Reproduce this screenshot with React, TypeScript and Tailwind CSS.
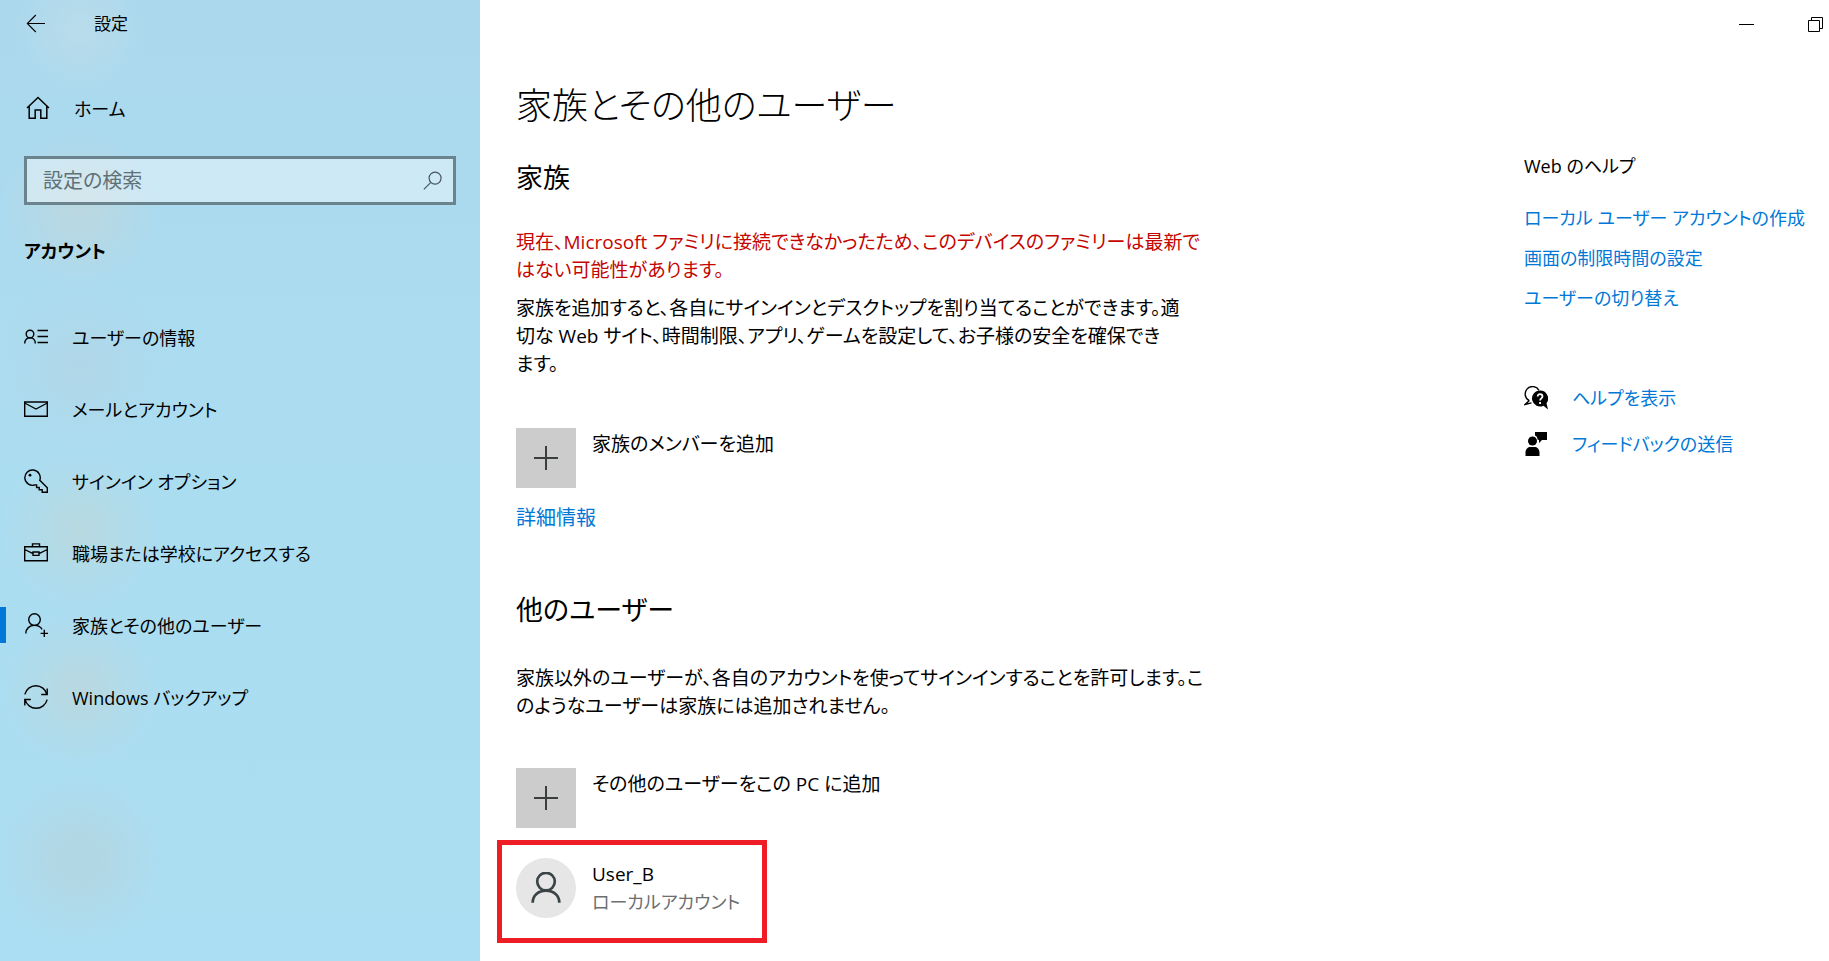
import type { ReactNode } from 'react';

interface IconProps {
  children: ReactNode;
  className?: string;
}

function Icon({ children, className = 'size-6' }: IconProps) {
  return (
    <svg
      viewBox="0 0 24 24"
      className={`shrink-0 ${className}`}
      fill="none"
      stroke="currentColor"
      strokeWidth="1.4"
      aria-hidden="true"
    >
      {children}
    </svg>
  );
}

const navItems = [
  {
    label: 'ユーザーの情報',
    icon: (
      <Icon>
        <circle cx="6" cy="9" r="3.8" />
        <path d="M.7 18.5c0-3.5 2.3-5.8 5.3-5.8s5.3 2.3 5.3 5.8M13.5 5.5H24M13.5 11.5H24M13.5 17.5H24" />
      </Icon>
    ),
  },
  {
    label: 'メールとアカウント',
    icon: (
      <Icon>
        <path d="M.7 5h22.6v14.3H.7zM.7 6l11.3 6 11.3-6" />
      </Icon>
    ),
  },
  {
    label: 'サインイン オプション',
    icon: (
      <Icon>
        <path d="M15.8 11.2a7.7 7.7 0 1 0-4.7 4.7h1.5v2.6h2.6v2.3h3v2.5h5.1v-4.6z" />
        <circle cx="6" cy="6.2" r="1.4" fill="currentColor" stroke="none" />
      </Icon>
    ),
  },
  {
    label: '職場または学校にアクセスする',
    icon: (
      <Icon>
        <path d="M.7 5.8h22.6v14H.7zM8.5 5.8V2.9h7v2.9M.7 8.5l8.3 4.2M23.3 8.5L15 12.7M9 11h6v3.4H9z" />
      </Icon>
    ),
  },
  {
    label: '家族とその他のユーザー',
    active: true,
    icon: (
      <Icon>
        <circle cx="10.5" cy="6.6" r="5.8" />
        <path d="M1.8 20.6c0-5 3.6-8.2 8.7-8.2 3.4 0 6.2 1.5 7.6 4M20.3 16.8v7.2M16.6 20.4H24" />
      </Icon>
    ),
  },
  {
    label: 'Windows バックアップ',
    icon: (
      <Icon>
        <path d="M.8 9.3a11.4 11.4 0 0 1 22.1 0M23.2 3.5v6h-6M23.2 14.7a11.4 11.4 0 0 1-22.1 0M.8 20.5v-6h6" />
      </Icon>
    ),
  },
];

const helpLinks = ['ローカル ユーザー アカウントの作成', '画面の制限時間の設定', 'ユーザーの切り替え'];

function Sidebar() {
  return (
    <nav className="w-[480px] shrink-0 bg-[#abdaee] bg-[radial-gradient(circle_at_80px_30px,#b9dcea_0,#b9dcea00_70px),radial-gradient(circle_at_80px_210px,#bbd7df_0,#bbd7df00_80px),radial-gradient(circle_at_80px_370px,#b1d7e8_0,#b1d7e800_90px),radial-gradient(circle_at_80px_530px,#b8d9e0_0,#b8d9e000_80px),radial-gradient(circle_at_80px_690px,#b9d8e0_0,#b9d8e000_80px),radial-gradient(circle_at_80px_860px,#b2d7e4_20px,#b2d7e400_85px),linear-gradient(#abd8ed,#abddf1_50%,#abdef2)] text-lg">
      <div className="flex h-12 items-center pl-6">
        <button type="button" aria-label="戻る" className="w-[70px]">
          <Icon>
            <path d="M21 11.5H3.5M11.8 3L3.3 11.5l8.5 8.5" strokeWidth="1.1" />
          </Icon>
        </button>
        <span className="text-[17px]">設定</span>
      </div>

      <a href="#home" className="mt-9 flex h-12 items-center gap-6 pl-[26px]">
        <Icon>
          <path d="M1 12L12 1.5 23 12M3.2 10.2v12h6v-8.2h5.6v8.2h6v-12" strokeWidth="1.5" />
        </Icon>
        <span className="pt-0.5">ホーム</span>
      </a>

      <div className="mx-6 mt-6 flex h-[49px] items-center border-[3px] border-[#6b838d] bg-white/40 pr-2.5 pl-4">
        <input
          type="text"
          aria-label="設定の検索"
          placeholder="設定の検索"
          className="min-w-0 flex-1 bg-transparent text-[20px] outline-none placeholder:text-[#5f7178]"
        />
        <Icon className="size-5 text-[#45545b]">
          <circle cx="14.5" cy="8.5" r="7.2" />
          <path d="M9.4 13.6L1 22" />
        </Icon>
      </div>

      <h2 className="mt-8 pl-6 leading-7 font-bold">アカウント</h2>

      <ul className="mt-9">
        {navItems.map((item) => (
          <li key={item.label} className="flex h-[72px] items-center">
            <span className={item.active ? 'h-9 w-1.5 bg-[#0078d7]' : 'h-9 w-1.5'} />
            <a href="#nav" className="flex items-center gap-6 pl-[18px]">
              {item.icon}
              <span className="pt-0.5">{item.label}</span>
            </a>
          </li>
        ))}
      </ul>
    </nav>
  );
}

function AddButton({ label }: { label: string }) {
  return (
    <button type="button" className="flex gap-4 text-left">
      <span className="flex size-[60px] items-center justify-center bg-[#ccc]">
        <Icon>
          <path d="M12 0v24M0 12h24" stroke="#3a3f3e" strokeWidth="2" />
        </Icon>
      </span>
      <span className="pt-0.5">{label}</span>
    </button>
  );
}

function Content() {
  return (
    <main className="min-w-0 flex-1 pl-9">
      <h1 className="mt-8 text-[36px] leading-[52px] font-light">家族とその他のユーザー</h1>

      <h2 className="mt-7 text-[27px] leading-9">家族</h2>
      <p className="mt-8 text-[#c50500]">
        現在、Microsoft ファミリに接続できなかったため、このデバイスのファミリーは最新で
        <br />
        はない可能性があります。
      </p>
      <p className="mt-2.5">
        家族を追加すると、各自にサインインとデスクトップを割り当てることができます。適
        <br />
        切な Web サイト、時間制限、アプリ、ゲームを設定して、お子様の安全を確保でき
        <br />
        ます。
      </p>
      <div className="mt-[50px]">
        <AddButton label="家族のメンバーを追加" />
      </div>
      <a href="#more" className="mt-4 block w-fit text-[20px] leading-7 text-[#0078d7]">
        詳細情報
      </a>

      <h2 className="mt-[60px] text-[27px] leading-9">他のユーザー</h2>
      <p className="mt-9">
        家族以外のユーザーが、各自のアカウントを使ってサインインすることを許可します。こ
        <br />
        のようなユーザーは家族には追加されません。
      </p>
      <div className="mt-12">
        <AddButton label="その他のユーザーをこの PC に追加" />
      </div>

      <button
        type="button"
        className="mt-3 mb-4 -ml-[19px] flex h-[103px] w-[270px] gap-4 border-5 border-[#ee1c25] pt-[13px] pl-3.5 text-left"
      >
        <span className="flex size-[60px] items-center justify-center rounded-full bg-[#e6e6e6] text-[#3a4345]">
          <Icon className="size-8">
            <circle cx="12" cy="7.2" r="6.6" strokeWidth="2" />
            <path d="M2 23c0-5.4 4.2-9 10-9s10 3.6 10 9" strokeWidth="2" />
          </Icon>
        </span>
        <span className="pt-0.5">
          User_B
          <br />
          <span className="text-lg leading-7 text-[#6b6f70]">ローカルアカウント</span>
        </span>
      </button>
    </main>
  );
}

function HelpPanel() {
  return (
    <aside className="w-[305px] shrink-0 pt-[104px] text-lg leading-7 whitespace-nowrap">
      <h3>Web のヘルプ</h3>
      <ul className="mt-6 space-y-3 text-[#0078d7]">
        {helpLinks.map((label) => (
          <li key={label}>
            <a href="#help">{label}</a>
          </li>
        ))}
      </ul>

      <ul className="mt-[72px] space-y-[18px]">
        <li className="flex items-center gap-6">
          <Icon>
            <path d="M5.3 14.6A7.4 7.4 0 1 1 15 4.3M5.3 14.4L1.2 18.4l6.300-1.500" />
            <path
              d="M16 4.5a8 8 0 1 0 3.5 15.2L24 23.5l-1.500-6.200A8 8 0 0 0 16 4.5z"
              fill="currentColor"
              stroke="none"
            />
            <path d="M13.7 10.5c0-3.3 4.8-3 4.8 0 0 1.9-2.4 1.9-2.4 4M16.1 16v2" stroke="white" strokeWidth="1.8" />
          </Icon>
          <a href="#get-help" className="text-[#0078d7]">
            ヘルプを表示
          </a>
        </li>
        <li className="flex items-center gap-6">
          <Icon>
            <g fill="currentColor" stroke="none">
              <circle cx="8.5" cy="9" r="4.5" />
              <path d="M1.5 24v-3.500c0-3.500 2.500-5.500 5-5.500h4c2.500 0 5 2 5 5.500V24zM11 0h12v8h-5l-3 3V8l-1.500-.5C13.500 5.500 12.500 4 11 3.500z" />
            </g>
          </Icon>
          <a href="#feedback" className="text-[#0078d7]">
            フィードバックの送信
          </a>
        </li>
      </ul>
    </aside>
  );
}

export default function App() {
  return (
    <div
      lang="ja"
      className="flex min-h-screen bg-white font-['Open_Sans','Noto_Sans_CJK_JP',sans-serif] text-[19px] leading-7 text-black [font-feature-settings:'palt']"
    >
      <Sidebar />
      <div className="flex min-w-0 flex-1 flex-col">
        <header className="flex h-12 items-center justify-end gap-[54px] pr-1.5">
          <button type="button" aria-label="最小化">
            <svg viewBox="0 0 15 15" className="size-[15px]" stroke="black">
              <path d="M0 7.5h15" />
            </svg>
          </button>
          <button type="button" aria-label="元に戻す">
            <svg viewBox="0 0 15 15" className="size-[15px]" fill="none" stroke="black">
              <path d="M.5 3.5h11v11H.5zM3.5 3.5v-3h11v11h-3" />
            </svg>
          </button>
        </header>
        <div className="flex flex-1">
          <Content />
          <HelpPanel />
        </div>
      </div>
    </div>
  );
}
